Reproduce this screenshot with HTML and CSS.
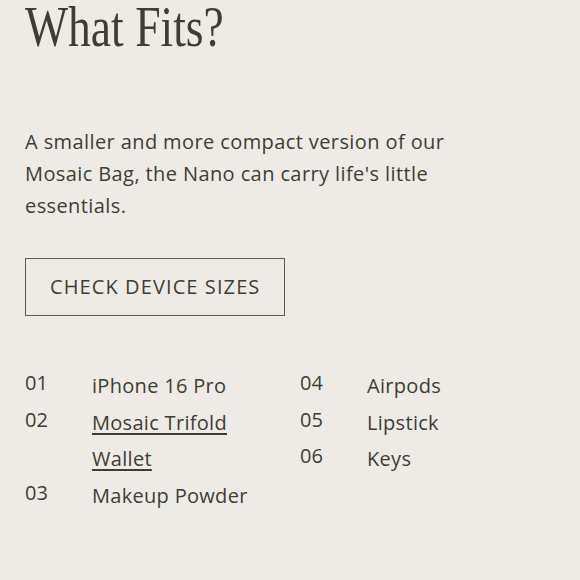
FILE: index.html
```html
<!DOCTYPE html>
<html lang="en">
<head>
<meta charset="utf-8">
<link rel="stylesheet" href="styles.css">
</head>
<body>
<section class="fits">
  <h2 class="title">What Fits?</h2>
  <p class="intro">A smaller and more compact version of our Mosaic Bag, the Nano can carry life's little essentials.</p>
  <a class="btn" href="#">Check Device Sizes</a>
  <div class="list">
    <ol class="col">
      <li class="item"><span class="num">01</span><span class="name">iPhone 16 Pro</span></li>
      <li class="item"><span class="num">02</span><a class="name link" href="#">Mosaic Trifold Wallet</a></li>
      <li class="item"><span class="num">03</span><span class="name">Makeup Powder</span></li>
    </ol>
    <ol class="col">
      <li class="item"><span class="num">04</span><span class="name">Airpods</span></li>
      <li class="item"><span class="num">05</span><span class="name">Lipstick</span></li>
      <li class="item"><span class="num">06</span><span class="name">Keys</span></li>
    </ol>
  </div>
</section>
</body>
</html>
```
FILE: styles.css
```css
html, body {
  margin: 0;
  padding: 0;
  background: #eeebe6;
}
body {
  color: #3d3e33;
  font-family: "Open Sans", "Liberation Sans", sans-serif;
  width: 580px;
  height: 580px;
  overflow: hidden;
}
.fits {
  padding: 0 25px;
}
.title {
  margin: 0;
  font-family: "Liberation Serif", serif;
  font-weight: normal;
  font-size: 57px;
  line-height: 54px;
  transform: scaleX(0.8);
  transform-origin: left top;
  white-space: nowrap;
  width: 300px;
}
.intro {
  margin: 72px 0 0;
  max-width: 460px;
  font-size: 20px;
  line-height: 32px;
  letter-spacing: 0.4px;
}
.btn {
  display: inline-block;
  margin-top: 36px;
  border: 1.5px solid #5b5c52;
  padding: 0 24px;
  height: 56px;
  line-height: 56px;
  font-size: 20px;
  text-transform: uppercase;
  letter-spacing: 1.1px;
  color: inherit;
  text-decoration: none;
}
.list {
  margin-top: 52px;
  width: 530px;
  display: grid;
  grid-template-columns: 1fr 1fr;
  column-gap: 20px;
}
.col {
  list-style: none;
  margin: 0;
  padding: 0;
}
.item {
  display: flex;
  font-size: 20px;
  line-height: 36.5px;
  letter-spacing: 0.3px;
}
.num {
  flex: 0 0 67px;
  font-size: 20px;
  line-height: 30px;
  letter-spacing: 0;
}
.name {
  flex: 1;
  color: inherit;
}
.link {
  text-decoration: underline;
  text-underline-offset: 3px;
  text-decoration-thickness: 1.5px;
}
```
